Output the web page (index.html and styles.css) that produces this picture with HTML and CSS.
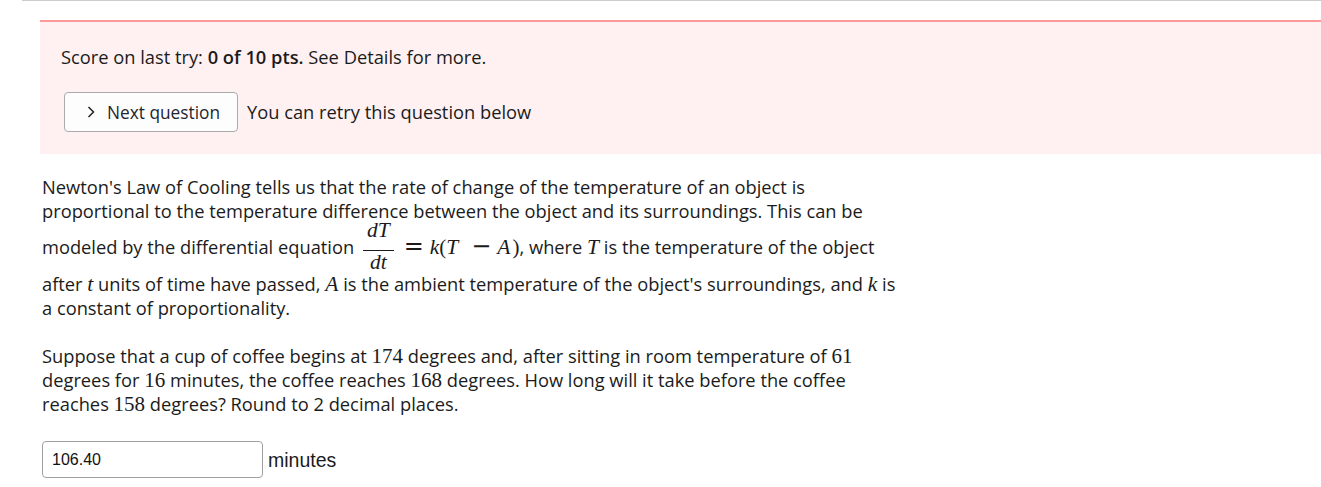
FILE: index.html
```html
<!DOCTYPE html>
<html>
<head>
<meta charset="utf-8">
<link rel="stylesheet" href="styles.css">
</head>
<body>
<div class="page">
  <div class="toprule"></div>
  <div class="content">
    <div class="notice">
      <p class="score">Score on last try: <b>0 of 10 pts.</b> See Details for more.</p>
      <div class="actions">
        <button class="next-btn" type="button">
          <svg class="chev" width="8" height="12" viewBox="0 0 8 12"><polyline points="1.5,1 6.5,6 1.5,11" fill="none" stroke="#222" stroke-width="1.5"/></svg>
          Next question
        </button>
        <span class="retry">You can retry this question below</span>
      </div>
    </div>
    <div class="question">
      <p>Newton's Law of Cooling tells us that the rate of change of the temperature of an object is<br>
      proportional to the temperature difference between the object and its surroundings. This can be<br>
      modeled by the differential equation <span class="frac"><span class="num m">dT</span><span class="den m">dt</span></span><span class="op rel">=</span><span class="m">k</span><span class="mr">(</span><span class="m sp4">T</span><span class="op bin">&minus;</span><span class="m sp2">A</span><span class="mr">)</span>, where <span class="m">T</span> is the temperature of the object<br>
      after <span class="m">t</span> units of time have passed, <span class="m">A</span> is the ambient temperature of the object's surroundings, and <span class="m">k</span> is<br>
      a constant of proportionality.</p>
      <p class="last">Suppose that a cup of coffee begins at <span class="mr">174</span> degrees and, after sitting in room temperature of <span class="mr">61</span><br>
      degrees for <span class="mr">16</span> minutes, the coffee reaches <span class="mr">168</span> degrees. How long will it take before the coffee<br>
      reaches <span class="mr">158</span> degrees? Round to 2 decimal places.</p>
      <div class="answer">
        <input class="ans-input" type="text" value="106.40">
        <span class="unit">minutes</span>
      </div>
    </div>
  </div>
</div>
</body>
</html>
```
FILE: styles.css
```css
html, body {
  margin: 0;
  padding: 0;
  background: #fff;
}
body {
  font-family: "Open Sans", "Noto Sans", sans-serif;
  font-size: 18.3px;
  line-height: 24px;
  color: #1b1b1b;
}
.page {
  width: 1321px;
  overflow: hidden;
}
.toprule {
  margin-left: 22px;
  height: 1px;
  background: #cccccc;
}
.content {
  margin-left: 40px;
  padding-top: 19px;
}
.notice {
  border-top: 2px solid #ff9a9a;
  background: #fff1f1;
  padding: 23px 0 22px 21px;
}
.score {
  margin: 0 0 23px 0;
}
.score b {
  font-weight: 600;
}
.actions {
  display: flex;
  align-items: center;
  gap: 9px;
  margin-left: 3px;
}
.next-btn {
  display: inline-flex;
  align-items: center;
  gap: 12px;
  height: 40px;
  width: 174px;
  padding: 0 0 0 22px;
  border: 1px solid #aaaaaa;
  border-radius: 4px;
  background: #fdfdfd;
  font-family: "Open Sans", "Noto Sans", sans-serif;
  font-size: 17.3px;
  color: #1e2530;
}
.chev {
  display: block;
}
.question {
  padding-left: 2px;
  padding-top: 21px;
}
.question p {
  margin: 0 0 24px 0;
}
.question p.last {
  margin-bottom: 25px;
}
.m {
  font-family: "Liberation Serif", "DejaVu Serif", serif;
  font-style: italic;
  font-size: 21.5px;
}
.mr {
  font-family: "Liberation Serif", "DejaVu Serif", serif;
  font-size: 21px;
}
.op {
  font-family: "DejaVu Serif", "Liberation Serif", serif;
  font-size: 24px;
}
.rel {
  margin: 0 6px 0 10px;
}
.bin {
  margin: 0 6px 0 9px;
}
.sp4 {
  margin-right: 4px;
}
.sp2 {
  margin-right: 2px;
}
.frac {
  display: inline-flex;
  flex-direction: column;
  align-items: center;
  vertical-align: 17px;
  padding: 0 0 0 4px;
  margin-top: -1px;
  margin-bottom: 2px;
}
.frac .num {
  line-height: 16px;
  border-bottom: 1px solid #1b1b1b;
  padding: 0 4px 12px;
}
.frac .den {
  line-height: 16px;
  padding-top: 3px;
}
.answer {
  display: flex;
  align-items: center;
  gap: 5px;
}
.ans-input {
  box-sizing: border-box;
  width: 221px;
  height: 37px;
  border: 1px solid #a0a0a0;
  border-radius: 4px;
  padding: 0 9px;
  font-family: "Liberation Sans", Arial, sans-serif;
  font-size: 16px;
  color: #111;
  background: #fff;
}
.unit {
  font-family: "Liberation Sans", Arial, sans-serif;
  font-size: 19.5px;
}
```
